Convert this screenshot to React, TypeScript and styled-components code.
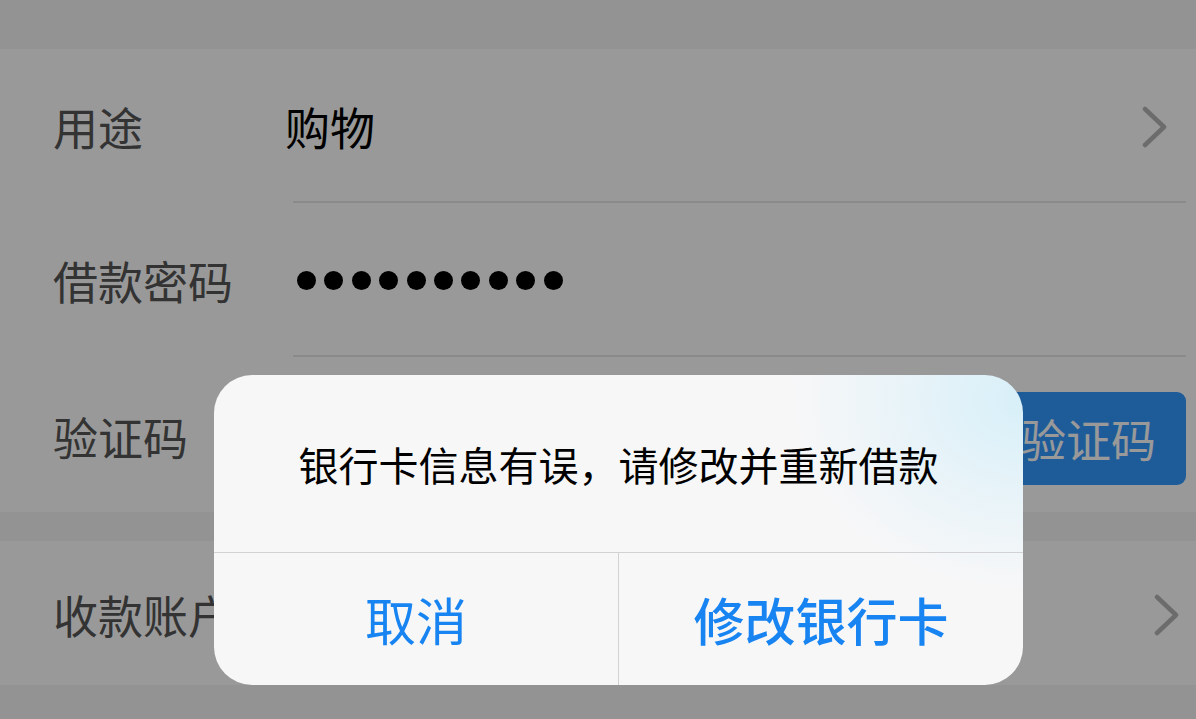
import React from "react";
import styled, { createGlobalStyle } from "styled-components";

const GlobalStyle = createGlobalStyle`
  html, body {
    margin: 0;
    padding: 0;
    background: #f5f5f7;
    font-family: "Noto Sans CJK SC", "Noto Sans", sans-serif;
  }
  * {
    box-sizing: border-box;
  }
`;

const Page = styled.div`
  position: relative;
  min-height: 100vh;
  padding-top: 49px;
  background: #f5f5f7;
  overflow: hidden;
`;

const Section = styled.div`
  background: #ffffff;
  margin-bottom: 29px;
  display: flex;
  flex-direction: column;
`;

const Row = styled.div<{ $height: number; $padRight: number }>`
  height: ${(p) => p.$height}px;
  display: flex;
  align-items: center;
  padding-left: 53px;
  padding-right: ${(p) => p.$padRight}px;
  padding-top: 3px;
`;

const Label = styled.div`
  width: 232px;
  flex-shrink: 0;
  font-size: 45px;
  color: #555555;
  line-height: 1;
`;

const Value = styled.div`
  flex: 1;
  font-size: 45px;
  color: #000000;
  line-height: 1;
`;

const Divider = styled.div`
  height: 2px;
  margin-left: 293px;
  margin-right: 10px;
  background: #e6e6e6;
`;

const Dots = styled.div`
  flex: 1;
  display: flex;
  gap: 8.4px;
  padding-left: 12px;
`;

const Dot = styled.span`
  width: 19px;
  height: 19px;
  border-radius: 50%;
  background: #000000;
`;

const CodeButton = styled.button`
  height: 93px;
  margin-top: 5px;
  padding: 0 30px;
  border: none;
  border-radius: 9px;
  background: #3399ff;
  color: #ffffff;
  font-family: inherit;
  font-size: 45px;
  line-height: 1;
  white-space: nowrap;
`;

const Chevron = () => (
  <svg width="25" height="42" viewBox="0 0 25 42" fill="none">
    <path
      d="M3 3 L22 21 L3 39"
      stroke="#b5b5b5"
      strokeWidth="4.5"
      strokeLinecap="round"
      strokeLinejoin="round"
    />
  </svg>
);

const Overlay = styled.div`
  position: absolute;
  inset: 0;
  background: rgba(0, 0, 0, 0.4);
`;

const Alert = styled.div`
  position: absolute;
  left: 214px;
  top: 375px;
  width: 809px;
  height: 310px;
  border-radius: 38px;
  overflow: hidden;
  display: flex;
  flex-direction: column;
  background:
    radial-gradient(ellipse 230px 190px at 100% 8%, rgba(214, 239, 249, 0.95), rgba(214, 239, 249, 0) 100%),
    #f7f7f8;
`;

const Message = styled.div`
  height: 177px;
  display: flex;
  align-items: center;
  justify-content: center;
  font-size: 40px;
  color: #000000;
  line-height: 1;
`;

const Actions = styled.div`
  flex: 1;
  display: flex;
  border-top: 1.5px solid #d2d2d4;
`;

const Action = styled.button<{ $primary?: boolean }>`
  flex: 1;
  border: none;
  background: transparent;
  font-family: inherit;
  font-size: 51px;
  line-height: 1;
  color: #1784f2;
  font-weight: ${(p) => (p.$primary ? 500 : 400)};
  padding-top: 2px;
  & + & {
    border-left: 1.5px solid #d2d2d4;
  }
`;

export default function App() {
  return (
    <>
      <GlobalStyle />
      <Page>
        <Section>
          <Row $height={152} $padRight={29}>
            <Label>用途</Label>
            <Value>购物</Value>
            <Chevron />
          </Row>
          <Divider />
          <Row $height={152} $padRight={10}>
            <Label>借款密码</Label>
            <Dots>
              {Array.from({ length: 10 }).map((_, i) => (
                <Dot key={i} />
              ))}
            </Dots>
          </Row>
          <Divider />
          <Row $height={155} $padRight={10}>
            <Label>验证码</Label>
            <Value />
            <CodeButton>获取验证码</CodeButton>
          </Row>
        </Section>
        <Section>
          <Row $height={144} $padRight={17}>
            <Label>收款账户</Label>
            <Value />
            <Chevron />
          </Row>
        </Section>
        <Overlay />
        <Alert>
          <Message>银行卡信息有误，请修改并重新借款</Message>
          <Actions>
            <Action>取消</Action>
            <Action $primary>修改银行卡</Action>
          </Actions>
        </Alert>
      </Page>
    </>
  );
}
